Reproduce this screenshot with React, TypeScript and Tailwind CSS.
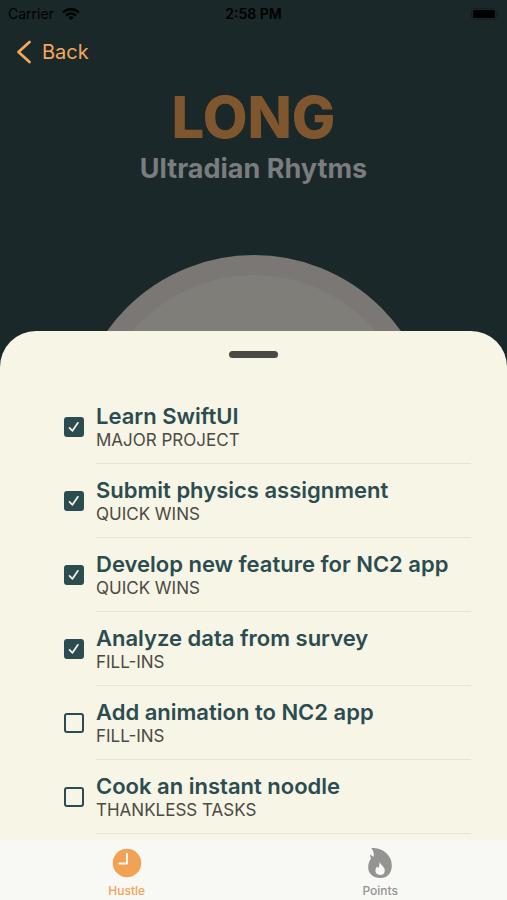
import { useState } from "react";

interface Task {
  id: number;
  title: string;
  category: string;
  done: boolean;
}

const initialTasks: Task[] = [
  { id: 1, title: "Learn SwiftUI", category: "MAJOR PROJECT", done: true },
  {
    id: 2,
    title: "Submit physics assignment",
    category: "QUICK WINS",
    done: true,
  },
  {
    id: 3,
    title: "Develop new feature for NC2 app",
    category: "QUICK WINS",
    done: true,
  },
  { id: 4, title: "Analyze data from survey", category: "FILL-INS", done: true },
  { id: 5, title: "Add animation to NC2 app", category: "FILL-INS", done: false },
  {
    id: 6,
    title: "Cook an instant noodle",
    category: "THANKLESS TASKS",
    done: false,
  },
];

const StatusBar = () => {
  return (
    <div className="grid h-7 grid-cols-3 items-center px-2 text-sm text-black">
      <div className="flex items-center gap-2">
        <span>Carrier</span>
        <svg className="h-3 w-[18px]" viewBox="0 0 18 12" fill="none">
          <path d="M1 4.500a11.300 11.300 0 0 1 16 0" stroke="currentColor" strokeWidth="2.400" />
          <path d="M4 7.600a7.100 7.100 0 0 1 10 0" stroke="currentColor" strokeWidth="2.400" />
          <path d="M9 12 6.300 9.500a3.900 3.900 0 0 1 5.400 0Z" fill="currentColor" />
        </svg>
      </div>
      <span className="text-center font-semibold">2:58 PM</span>
      <svg className="h-3 w-7 justify-self-end" viewBox="0 0 28 12" fill="none">
        <rect x="0.5" y="0.5" width="25" height="11" rx="3" stroke="#131e1f" />
        <rect x="2" y="2" width="22" height="8" rx="1.5" fill="currentColor" />
        <path d="M27 4v4" stroke="#131e1f" />
      </svg>
    </div>
  );
};

const TaskRow = ({ task, onToggle }: { task: Task; onToggle: () => void }) => {
  const inputId = `task-${task.id}`;

  return (
    <li className="flex items-center gap-3">
      <span className="grid size-5 shrink-0 place-items-center">
        <input
          id={inputId}
          className="col-start-1 row-start-1 size-5 appearance-none rounded-[3px] border-2 border-[#2b4c50] checked:bg-[#2b4c50]"
          type="checkbox"
          checked={task.done}
          onChange={onToggle}
        />
        {task.done && (
          <svg
            className="pointer-events-none col-start-1 row-start-1 size-5"
            viewBox="0 0 20 20"
            fill="none"
          >
            <path
              d="m5.500 10.800 3 3 5.400-8"
              stroke="#f7f5e5"
              strokeWidth="1.700"
              strokeLinecap="round"
              strokeLinejoin="round"
            />
          </svg>
        )}
      </span>
      <label
        className="flex h-[74px] flex-1 flex-col justify-center border-b border-[#e6e4d6] pt-0.5"
        htmlFor={inputId}
      >
        <span className="text-[22px] leading-6 font-semibold whitespace-nowrap text-[#2b4c50]">
          {task.title}
        </span>
        <span className="text-[17px] leading-6 text-[#4b4a45]">
          {task.category}
        </span>
      </label>
    </li>
  );
};

const TabBar = () => {
  return (
    <nav className="grid h-[60px] grid-cols-2 bg-[#f8f8f5] text-xs font-medium">
      <button
        className="flex flex-col items-center gap-[5px] pt-2 text-[#f2a255]"
        type="button"
      >
        <svg className="size-[30px]" viewBox="0 0 30 30" fill="none">
          <circle cx="15" cy="15" r="14.3" fill="currentColor" />
          <path
            d="M15 5.8v9.7H7.5"
            stroke="#f8f8f5"
            strokeWidth="2"
            strokeLinecap="round"
            strokeLinejoin="round"
          />
        </svg>
        Hustle
      </button>
      <button
        className="flex flex-col items-center gap-[5px] pt-2 text-[#949492]"
        type="button"
      >
        <svg className="size-[30px]" viewBox="0 0 30 30">
          <path
            d="M6.200 0C17 -.6 26.800 6.500 26.800 17.500c0 8-4.600 12.500-11.600 12.500C8 30 3.200 25.700 3.200 19.500c0-3.600 1-6.400 2.800-9-.7-1.300-1-2.700-.8-4.300 1 1.200 2 2 3.300 2.500C9.400 5.500 8.300 2.600 6.200 0Z"
            fill="currentColor"
          />
          <path
            d="M14.500 13.200c.2 3.400 5.300 5.100 5.300 9.200 0 2.900-1.900 4.600-4.700 4.600s-4.700-1.700-4.700-4.400c0-1.700.7-3.100 1.700-4.200.4.800.8 1.200 1.400 1.500.8-1.900 1.200-4.200 1-6.700Z"
            fill="#f8f8f5"
          />
        </svg>
        Points
      </button>
    </nav>
  );
};

const App = () => {
  const [tasks, setTasks] = useState(initialTasks);

  const handleToggle = (id: number) => {
    setTasks((prev) =>
      prev.map((task) =>
        task.id === id ? { ...task, done: !task.done } : task,
      ),
    );
  };

  return (
    <div className="flex min-h-screen flex-col bg-[#1a2829] font-[Inter,sans-serif]">
      <StatusBar />
      <header className="flex h-12 items-center px-4">
        <button
          className="flex items-center gap-2.5 text-xl text-[#f2a65f]"
          type="button"
        >
          <svg className="h-6 w-4" viewBox="0 0 16 24" fill="none">
            <path
              d="M13.500 2 2.500 12l11 10"
              stroke="currentColor"
              strokeWidth="2.800"
              strokeLinecap="round"
              strokeLinejoin="round"
            />
          </svg>
          Back
        </button>
      </header>
      <div className="flex flex-col items-center pt-[9px]">
        <h1 className="text-[58px] leading-16 font-extrabold text-[#80562e]">
          LONG
        </h1>
        <p className="text-[27px] leading-10 font-bold text-[#7b7c7f]">
          Ultradian Rhytms
        </p>
      </div>
      {/* only the top of the timer dial shows above the sheet */}
      <div className="mt-[66px] flex h-[76px] justify-center overflow-hidden">
        <div className="size-[360px] shrink-0 rounded-full border-20 border-[#7a7775] bg-[#807e79]" />
      </div>
      <main className="flex flex-1 flex-col items-center rounded-t-[36px] bg-[#f7f5e5] pt-5">
        <div className="h-[7px] w-[49px] rounded-full bg-[#4a4945]" />
        <ul className="mt-8 w-full pr-9 pl-16">
          {tasks.map((task) => (
            <TaskRow
              key={task.id}
              task={task}
              onToggle={() => handleToggle(task.id)}
            />
          ))}
        </ul>
      </main>
      <TabBar />
    </div>
  );
};

export default App;
